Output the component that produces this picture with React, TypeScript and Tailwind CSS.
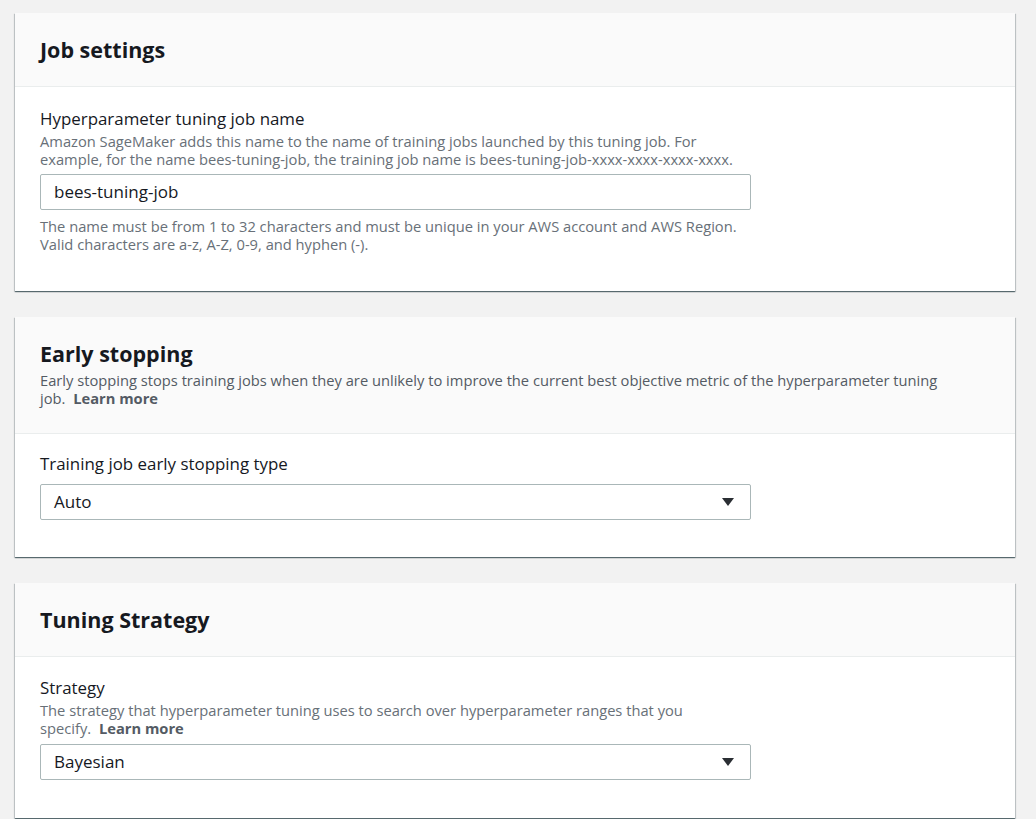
const font = { fontFamily: '"Open Sans", "Noto Sans", sans-serif' };

const Caret = () => (
  <svg width="12" height="8" viewBox="0 0 12 8" className="text-[#2a2e33]">
    <path d="M0 0h12L6 8z" fill="currentColor" />
  </svg>
);

const Card = ({
  title,
  description,
  children,
}: {
  title: string;
  description?: React.ReactNode;
  children: React.ReactNode;
}) => (
  <section className="bg-white shadow-[0_1px_1px_0_rgba(0,28,36,0.5),1px_1px_1px_0_rgba(0,28,36,0.15),-1px_1px_1px_0_rgba(0,28,36,0.15)]">
    <div className="bg-[#fafafa] border-b border-[#eaeded] px-[25px] pt-[24px] pb-[23px]">
      <h2 className="text-[21.5px] leading-[26px] font-bold text-[#16191f]">{title}</h2>
      {description && (
        <p className="mt-[4px] mb-[3px] text-[14.7px] leading-[18px] text-[#545b64]">{description}</p>
      )}
    </div>
    <div className="px-[25px]">{children}</div>
  </section>
);

const LearnMore = () => <span className="ml-1 font-bold text-[#545b64]">Learn more</span>;

const Select = ({ value }: { value: string }) => (
  <div className="flex items-center justify-between w-[711px] h-[36px] border border-[#aab7b8] rounded-[2px] pl-[13px] pr-[16px] text-[17px] text-[#16191f]">
    <span>{value}</span>
    <Caret />
  </div>
);

export default function App() {
  return (
    <div className="min-h-screen bg-[#f2f2f2] pt-[13px] pl-[15px] pr-[21px]" style={font}>
      <div className="flex flex-col gap-[26px]">
        <Card title="Job settings">
          <div className="pt-[22px] pb-[38px]">
            <label className="block text-[16.9px] leading-[20px] text-[#16191f]">
              Hyperparameter tuning job name
            </label>
            <p className="mt-[3px] text-[14.7px] leading-[18px] text-[#687078] whitespace-nowrap">
              Amazon SageMaker adds this name to the name of training jobs launched by this tuning job. For
              <br />
              example, for the name bees-tuning-job, the training job name is bees-tuning-job-xxxx-xxxx-xxxx-xxxx.
            </p>
            <div className="mt-[6px] flex items-center w-[711px] h-[36px] border border-[#aab7b8] rounded-[2px] pl-[13px] text-[17px] text-[#16191f]">
              bees-tuning-job
            </div>
            <p className="mt-[7px] text-[14.7px] leading-[18px] text-[#687078] whitespace-nowrap">
              The name must be from 1 to 32 characters and must be unique in your AWS account and AWS Region.
              <br />
              Valid characters are a-z, A-Z, 0-9, and hyphen (-).
            </p>
          </div>
        </Card>

        <Card
          title="Early stopping"
          description={
            <>
              Early stopping stops training jobs when they are unlikely to improve the current best objective metric of the hyperparameter tuning
              <br />
              job. <LearnMore />
            </>
          }
        >
          <div className="pt-[20px] pb-[37px]">
            <label className="block text-[16.9px] leading-[20px] text-[#16191f]">
              Training job early stopping type
            </label>
            <div className="mt-[10px]">
              <Select value="Auto" />
            </div>
          </div>
        </Card>

        <Card title="Tuning Strategy">
          <div className="pt-[21px] pb-[38px]">
            <label className="block text-[16.9px] leading-[20px] text-[#16191f]">Strategy</label>
            <p className="mt-[3px] text-[14.7px] leading-[18px] text-[#687078] whitespace-nowrap">
              The strategy that hyperparameter tuning uses to search over hyperparameter ranges that you
              <br />
              specify. <LearnMore />
            </p>
            <div className="mt-[7px]">
              <Select value="Bayesian" />
            </div>
          </div>
        </Card>
      </div>
    </div>
  );
}
